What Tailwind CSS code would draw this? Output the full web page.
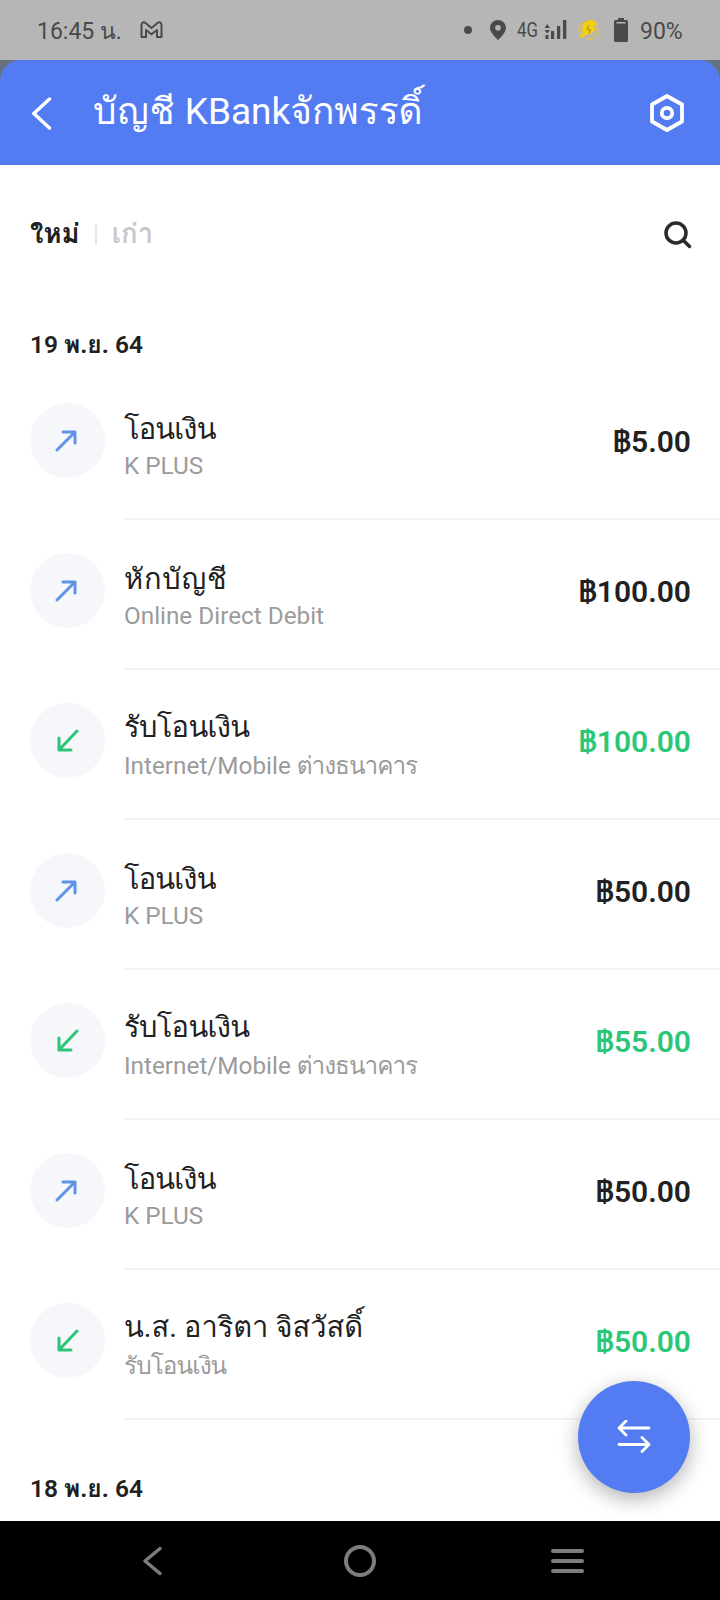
<!DOCTYPE html>
<html lang="th">
<head>
<meta charset="utf-8">
<title>KBank</title>
<script src="https://cdn.jsdelivr.net/npm/@tailwindcss/browser@4"></script>
</head>
<body class="bg-white">
<div class="relative flex h-[1600px] w-[720px] flex-col overflow-hidden bg-white font-[Roboto,Loma,sans-serif] whitespace-nowrap text-[#212121]">
  <div class="flex h-[60px] shrink-0 items-center bg-[#b6b6b6] pl-[37px] text-[#4a4a4a]">
    <span class="w-[103px] pt-[3px] text-[23px] leading-[28px]">16:45 น.</span>
    <svg class="h-[18px] w-[23px]" viewBox="0 0 23 18" fill="none" stroke="#4a4a4a" stroke-width="2" stroke-linejoin="round"><path d="M1.500 3.500v12.500h4.500V9l5.500 4.300L17 9v7h4.500V3.500Q20.500 0 17.500 2L11.500 7 5.500 2Q2.500 0 1.500 3.500z"/></svg>
    <div class="ml-auto flex items-center pr-[37px]">
      <span class="size-2 rounded-full bg-[#4a4a4a]"></span>
      <svg class="ml-[18px] h-[20px] w-[16px]" viewBox="0 0 16 20" fill="#4a4a4a"><path fill-rule="evenodd" d="M8 0a8 8 0 0 1 8 8c0 5-8 12-8 12S0 13 0 8a8 8 0 0 1 8-8zm0 5a2.800 2.800 0 1 0 0 5.600A2.800 2.800 0 0 0 8 5z"/></svg>
      <span class="ml-[11px] w-[22px] text-[20px] leading-[24px]"><span class="inline-block origin-left scale-x-[0.84]">4G</span></span>
      <svg class="ml-[5px] h-[20px] w-[23px]" viewBox="0 0 23 20" fill="#4a4a4a"><path d="M.5 8 3.200 4 6 8zM.5 10h5.500L3.200 13.500zM1.500 15h3v4h-3zM7 11h3.200v8H7zM13 6h3.200v13H13zM19 0h3.300v19H19z"/></svg>
      <svg class="ml-[11px] size-[22px]" viewBox="0 0 22 22"><g fill="none" stroke="#d9c15a" stroke-width="2"><path d="M1.500 13A9 9 0 0 1 7 3"/><path d="M19.500 9A8.500 8.500 0 0 1 9 19.500"/></g><path d="M11 1q7-1 9 6l-4-1 1 4q-2 5-8 6-4 0-5 4-3-3-1-6l2 1-1-4Q5 3 11 1z" fill="#f5cf0c"/><path d="m11 6-2 4 3.500 1-2 3.500" stroke="#b5a024" fill="none" stroke-width="1.400"/></svg>
      <svg class="ml-[14px] h-[24px] w-[14px]" viewBox="0 0 14 24" fill="#4a4a4a"><path fill-rule="evenodd" d="M4 0h6v2h2.500Q14 2 14 3.500v19q0 1.500-1.500 1.500h-11Q0 24 0 22.500v-19Q0 2 1.500 2H4zM2.500 4v1.500h9V4z"/></svg>
      <span class="ml-[12px] w-[43px] pt-[3px] text-[23px] leading-[28px]">90%</span>
    </div>
  </div>
  <div class="h-[105px] shrink-0 bg-[#66727f]">
    <div class="flex h-full items-center rounded-t-[21px] bg-[#547cf2] pr-[35px] pl-[31px] text-white">
      <svg class="h-[34px] w-[21px]" viewBox="0 0 21 34" fill="none" stroke="currentColor" stroke-width="3.400" stroke-linecap="round" stroke-linejoin="round"><path d="M18.500 3 2.800 17.500 18.500 32"/></svg>
      <span class="ml-[41px] pb-[1px] text-[37px] leading-[46px]"><span class="tracking-[0.8px]">บัญชี</span> KBankจักพรรดิ์</span>
      <svg class="ml-auto h-[40px] w-[36px]" viewBox="0 0 36 40" fill="none" stroke="currentColor" stroke-width="3.800" stroke-linejoin="round"><path d="M18 3 33 11.500v17L18 37 3 28.500v-17z"/><circle cx="18" cy="20" r="5.200"/></svg>
    </div>
  </div>
  <div class="flex h-[138px] shrink-0 items-center pr-[28px] pl-[30px] text-[27.5px] leading-[36px] font-bold">
    <span>ใหม่</span>
    <span class="ml-[15px] h-[21px] w-[2px] bg-[#e9e9e9]"></span>
    <span class="ml-[15px] text-[#c9c9c9]">เก่า</span>
    <svg class="ml-auto size-[29px]" viewBox="0 0 29 29" fill="none" stroke="#2b2b2b" stroke-width="3.500" stroke-linecap="round"><circle cx="13" cy="13" r="10"/><path d="m20.500 20.500 6 6"/></svg>
  </div>
  <div class="flex h-[67px] shrink-0 items-center pt-[17px] pl-[30px] text-[24.5px] leading-[30px] font-semibold"><span>19 <span class="font-bold">พ.ย.</span> 64</span></div>
  <div id="list" class="shrink-0"></div>
  <div class="flex h-[101px] shrink-0 items-center pt-[37px] pl-[30px] text-[24.5px] leading-[30px] font-semibold"><span>18 <span class="font-bold">พ.ย.</span> 64</span></div>
  <div class="flex h-[79px] shrink-0 items-center justify-between bg-black pr-[136px] pl-[142px] text-[#7d7d7d]">
    <svg class="h-[30px] w-[20px]" viewBox="0 0 20 30" fill="none" stroke="currentColor" stroke-width="3.500" stroke-linecap="round" stroke-linejoin="round"><path d="M18 2.500 3 15l15 12.500"/></svg>
    <span class="ml-[6px] size-[32px] rounded-full border-4 border-current"></span>
    <span class="flex w-[33px] flex-col gap-[6px]"><i class="h-[4px] rounded-full bg-current"></i><i class="h-[4px] rounded-full bg-current"></i><i class="h-[4px] rounded-full bg-current"></i></span>
  </div>
  <div class="absolute top-[1381px] left-[578px] flex size-[112px] items-center justify-center rounded-full bg-[#547cf2] shadow-[0_6px_20px_rgba(0,0,0,0.3)]">
    <svg class="h-[34px] w-[34px]" viewBox="0 0 34 34" fill="none" stroke="#fff" stroke-width="2.800" stroke-linecap="round" stroke-linejoin="round"><path d="M32 8H2M9 1 2 8l7 7M2 24.500h30M25 17.500l7 7-7 7"/></svg>
  </div>
</div>
<template id="out"><svg class="size-[24px]" viewBox="0 0 24 24" fill="none" stroke="#5f93e8" stroke-width="3" stroke-linecap="round" stroke-linejoin="round"><path d="M3 21 21 3M9 3h12v11"/></svg></template>
<template id="in"><svg class="ml-[4px] size-[24px]" viewBox="0 0 24 24" fill="none" stroke="#2bc678" stroke-width="3" stroke-linecap="round" stroke-linejoin="round"><path d="M21 2 3 21M3 9v12h12"/></svg></template>
<script>
const transfer = ['out', '<span class="tracking-[-0.85px]">โอนเงิน</span>', 'K PLUS'];
const received = ['in', '<span class="tracking-[-0.65px]">รับโอนเงิน</span>', 'Internet/Mobile <span class="tracking-[-1px]">ต่างธนาคาร</span>'];
const rows = [
  [...transfer, '5.00'],
  ['out', '<span class="tracking-[0.8px]">หักบัญชี</span>', 'Online Direct Debit', '100.00'],
  [...received, '100.00'],
  [...transfer, '50.00'],
  [...received, '55.00'],
  [...transfer, '50.00'],
  ['in', 'น.ส. อาริตา จิสวัสดิ์', '<span class="tracking-[-0.9px]">รับโอนเงิน</span>', '50.00'],
];
document.getElementById('list').innerHTML = rows.map(([t, a, b, m]) => `
  <div class="flex h-[150px] pl-[30px]">
    <div class="mt-[33px] flex size-[75px] items-center justify-center rounded-full bg-[#f5f7fb] pr-[4px]">${document.getElementById(t).innerHTML}</div>
    <div class="ml-[19px] flex grow justify-between border-b-2 border-[#f3f3f3] pr-[29px]">
      <div class="flex flex-col ${t === 'in' ? 'gap-[3px] pt-[37px]' : 'gap-px pt-[39px]'}">
        <span class="text-[29px] leading-[40px]">${a}</span>
        <span class="text-[24.3px] leading-[32px] text-[#9b9b9b]">${b}</span>
      </div>
      <span class="mt-[53px] text-[30px] leading-[38px] font-semibold ${t === 'in' ? 'text-[#2bc678]' : ''}">฿${m}</span>
    </div>
  </div>`).join('');
</script>
</body>
</html>
